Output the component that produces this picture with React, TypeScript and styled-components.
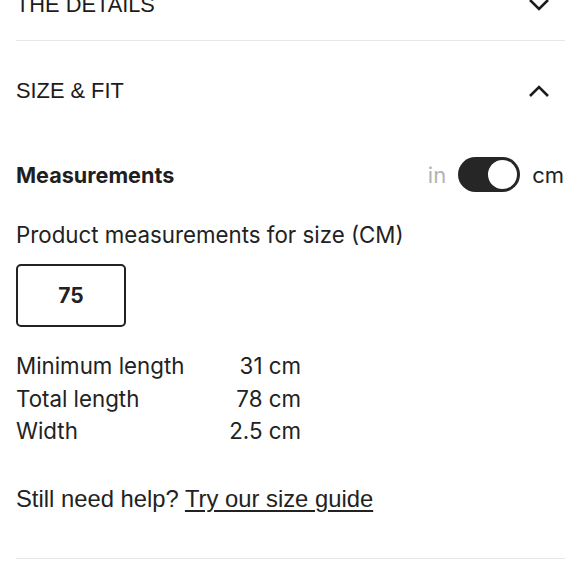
import styled, { createGlobalStyle } from 'styled-components'

const GlobalStyle = createGlobalStyle`
  body {
    margin: 0;
    background: #fff;
    color: #222;
    font-family: Inter, "Noto Sans", sans-serif;
    overflow: hidden;
  }
`

const Wrapper = styled.div`
  padding: 0 15px 0 16px;
  margin-top: -30px;
`

const AccordionHeader = styled.div<{ $height: number }>`
  height: ${(p) => p.$height}px;
  display: flex;
  align-items: center;
  justify-content: space-between;
`

const AccordionTitle = styled.span`
  font-family: "Liberation Sans", Arial, sans-serif;
  font-size: 21.8px;
  color: #1c1c1c;
`

const Divider = styled.hr`
  border: 0;
  border-top: 1px solid #e6e6e6;
  margin: 0;
`

const Chevron = styled.svg`
  width: 22px;
  height: 14px;
  margin-right: 15px;
`

const MeasureRow = styled.div`
  margin-top: 16px;
  height: 35px;
  display: flex;
  align-items: center;
  justify-content: space-between;
`

const MeasureTitle = styled.span`
  font-size: 21.6px;
  font-weight: 700;
  color: #1f1f1f;
`

const UnitSwitch = styled.div`
  display: flex;
  align-items: center;
  gap: 12px;
  margin-right: 1px;
`

const UnitLabel = styled.span<{ $active?: boolean }>`
  font-size: 22px;
  color: ${(p) => (p.$active ? '#222' : '#b3b3b3')};
`

const Track = styled.div`
  width: 62px;
  height: 35px;
  border-radius: 18px;
  background: #262626;
  display: flex;
  align-items: center;
  justify-content: flex-end;
  padding: 0 3px;
  box-sizing: border-box;
`

const Knob = styled.div`
  width: 29px;
  height: 29px;
  border-radius: 50%;
  background: #fff;
`

const Intro = styled.p`
  margin: 28px 0 0;
  font-size: 22.3px;
  line-height: 30px;
`

const SizeBox = styled.div`
  margin-top: 14px;
  width: 110px;
  height: 63px;
  box-sizing: border-box;
  border: 2px solid #222;
  border-radius: 5px;
  display: flex;
  align-items: center;
  justify-content: center;
  font-size: 21px;
  font-weight: 700;
`

const SpecTable = styled.div`
  margin-top: 23px;
  display: grid;
  grid-template-columns: 200px 85px;
  font-size: 22.3px;
  line-height: 32.5px;
`

const SpecValue = styled.span`
  text-align: right;
`

const Help = styled.p`
  margin: 36px 0 44px;
  font-family: "Liberation Sans", Arial, sans-serif;
  font-size: 23.8px;
  line-height: 30px;
`

const HelpLink = styled.a`
  color: inherit;
  text-decoration: underline;
  text-underline-offset: 3px;
  text-decoration-thickness: 1.5px;
`

const specs = [
  ['Minimum length', '31 cm'],
  ['Total length', '78 cm'],
  ['Width', '2.5 cm'],
]

function ChevronIcon({ up }: { up?: boolean }) {
  return (
    <Chevron viewBox="0 0 22 14">
      <polyline
        points={up ? '2,12 11,3 20,12' : '2,2 11,11 20,2'}
        fill="none"
        stroke="#1c1c1c"
        strokeWidth="2.6"
      />
    </Chevron>
  )
}

export default function App() {
  return (
    <Wrapper>
      <GlobalStyle />
      <AccordionHeader $height={70}>
        <AccordionTitle>THE DETAILS</AccordionTitle>
        <ChevronIcon />
      </AccordionHeader>
      <Divider />
      <AccordionHeader $height={100}>
        <AccordionTitle>SIZE &amp; FIT</AccordionTitle>
        <ChevronIcon up />
      </AccordionHeader>
      <MeasureRow>
        <MeasureTitle>Measurements</MeasureTitle>
        <UnitSwitch>
          <UnitLabel>in</UnitLabel>
          <Track>
            <Knob />
          </Track>
          <UnitLabel $active>cm</UnitLabel>
        </UnitSwitch>
      </MeasureRow>
      <Intro>Product measurements for size (CM)</Intro>
      <SizeBox>75</SizeBox>
      <SpecTable>
        {specs.map(([label, value]) => (
          <>
            <span key={label}>{label}</span>
            <SpecValue key={value}>{value}</SpecValue>
          </>
        ))}
      </SpecTable>
      <Help>
        Still need help? <HelpLink href="#">Try our size guide</HelpLink>
      </Help>
      <Divider />
    </Wrapper>
  )
}
